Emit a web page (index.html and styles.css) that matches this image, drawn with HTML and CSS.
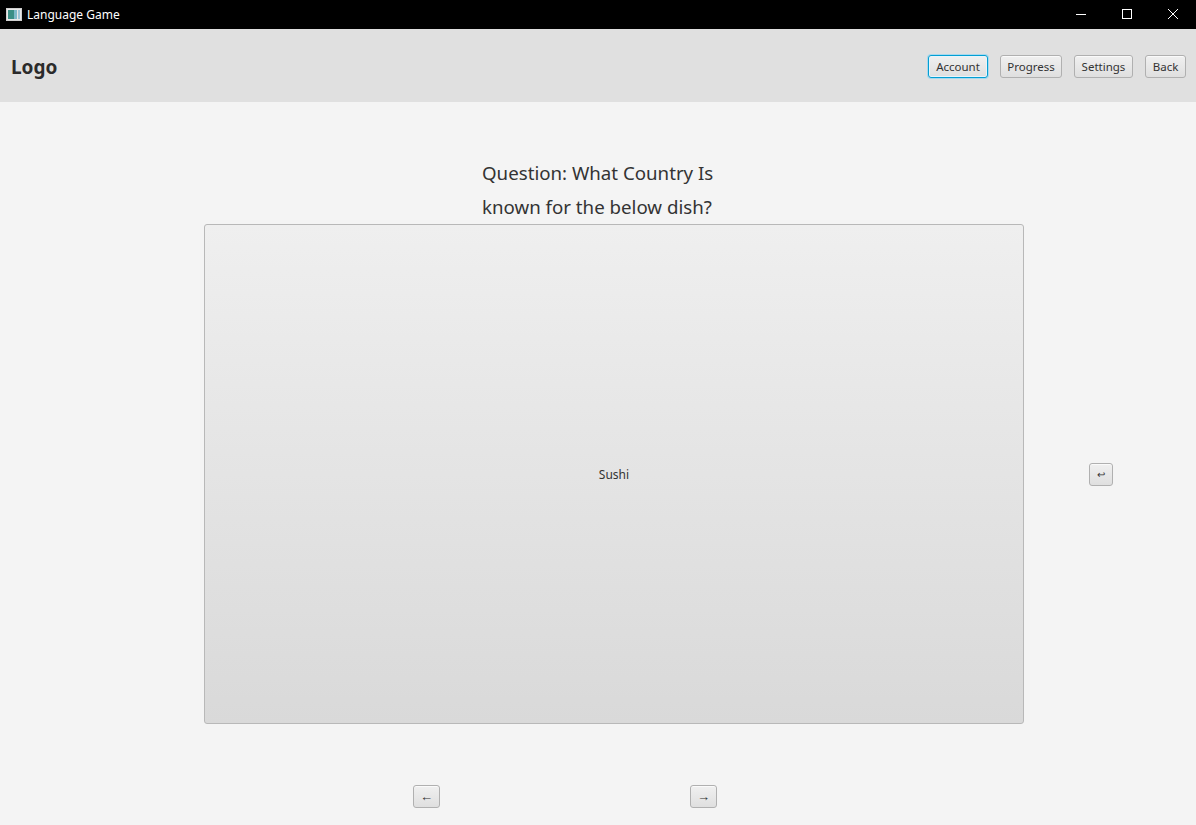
FILE: index.html
```html
<!DOCTYPE html>
<html>
<head>
<meta charset="utf-8">
<link rel="stylesheet" href="styles.css">
</head>
<body>
<div class="window">
  <div class="titlebar">
    <div class="title-left">
      <svg class="app-icon" width="16" height="13" viewBox="0 0 16 13">
        <rect x="0.5" y="0.5" width="15" height="12" fill="#e8e8e8" stroke="#cfcfcf"/>
        <rect x="2" y="2" width="6" height="9" fill="#3b8f86"/>
        <rect x="8" y="2" width="3" height="9" fill="#7fb9c9"/>
        <rect x="12" y="2" width="2" height="9" fill="#9fc6d8"/>
      </svg>
      <span class="title-text">Language Game</span>
    </div>
    <div class="win-controls">
      <svg class="wc" width="46" height="29" viewBox="0 0 46 29"><line x1="18" y1="14.5" x2="28" y2="14.5" stroke="#fff" stroke-width="1"/></svg>
      <svg class="wc" width="46" height="29" viewBox="0 0 46 29"><rect x="18.5" y="9.5" width="9" height="9" fill="none" stroke="#fff" stroke-width="1"/></svg>
      <svg class="wc" width="46" height="29" viewBox="0 0 46 29"><path d="M18 9 L28 19 M28 9 L18 19" stroke="#fff" stroke-width="1"/></svg>
    </div>
  </div>
  <div class="header">
    <div class="logo">Logo</div>
    <div class="nav">
      <button class="btn focused w-account">Account</button>
      <button class="btn w-progress">Progress</button>
      <button class="btn w-settings">Settings</button>
      <button class="btn w-back">Back</button>
    </div>
  </div>
  <div class="content">
    <div class="question">Question: What Country Is<br>known for the below dish?</div>
    <div class="card-row">
      <button class="card">Sushi</button>
      <button class="btn small">&#8617;</button>
    </div>
    <div class="arrows">
      <button class="btn arrow">&#8592;</button>
      <button class="btn arrow">&#8594;</button>
    </div>
  </div>
</div>
</body>
</html>
```

FILE: styles.css
```css
html, body {
  margin: 0;
  padding: 0;
}
body {
  width: 1196px;
  height: 825px;
  overflow: hidden;
  background: #f4f4f4;
  font-family: "Noto Sans", "Open Sans", "Liberation Sans", sans-serif;
}
.window {
  display: flex;
  flex-direction: column;
  height: 825px;
}
.titlebar {
  flex-shrink: 0;
  height: 29px;
  background: #000;
  display: flex;
  justify-content: space-between;
  align-items: center;
}
.title-left {
  display: flex;
  align-items: center;
  padding-left: 6px;
}
.app-icon {
  display: block;
}
.title-text {
  color: #fff;
  font-size: 12px;
  margin-left: 5px;
}
.win-controls {
  display: flex;
  height: 29px;
}
.wc {
  display: block;
}
.header {
  flex-shrink: 0;
  height: 73px;
  background: #e0e0e0;
  display: flex;
  align-items: center;
  justify-content: space-between;
  padding: 2px 10px 0 11px;
  box-sizing: border-box;
}
.logo {
  font-size: 19px;
  font-weight: bold;
  color: #2b2b2b;
}
.nav {
  display: flex;
  gap: 12px;
}
.btn {
  font-family: inherit;
  font-size: 11.5px;
  color: #333;
  height: 23px;
  padding: 0;
  border: 1px solid #b0b0b0;
  border-radius: 3px;
  background: linear-gradient(#f0f0f0, #dfdfdf);
  box-shadow: inset 0 1px 0 #fafafa;
  cursor: default;
  line-height: 1;
  flex-shrink: 0;
}
.w-account { width: 60px; }
.w-progress { width: 62px; }
.w-settings { width: 59px; }
.w-back { width: 41px; }
.btn.focused {
  border-color: #039ed3;
  box-shadow: 0 0 0 1px #a6d9ee, inset 0 0 0 1px #e8f4fa;
}
.content {
  flex: 1;
  display: flex;
  flex-direction: column;
}
.question {
  align-self: center;
  width: 232px;
  margin-top: 54px;
  font-size: 18.7px;
  line-height: 34px;
  color: #333;
  text-align: left;
  white-space: nowrap;
}
.card-row {
  flex-shrink: 0;
  display: flex;
  align-items: center;
  padding-left: 204px;
  gap: 65px;
}
.card {
  flex-shrink: 0;
  width: 820px;
  height: 500px;
  border: 1px solid #b8b8b8;
  border-radius: 3px;
  background: linear-gradient(#efefef, #d9d9d9);
  font-family: inherit;
  font-size: 12px;
  color: #333;
  padding: 0;
}
.btn.small {
  width: 24px;
  font-size: 10px;
}
.arrows {
  display: flex;
  padding-left: 413px;
  gap: 250px;
  margin-top: 61px;
}
.btn.arrow {
  width: 27px;
  font-size: 13px;
}
```
